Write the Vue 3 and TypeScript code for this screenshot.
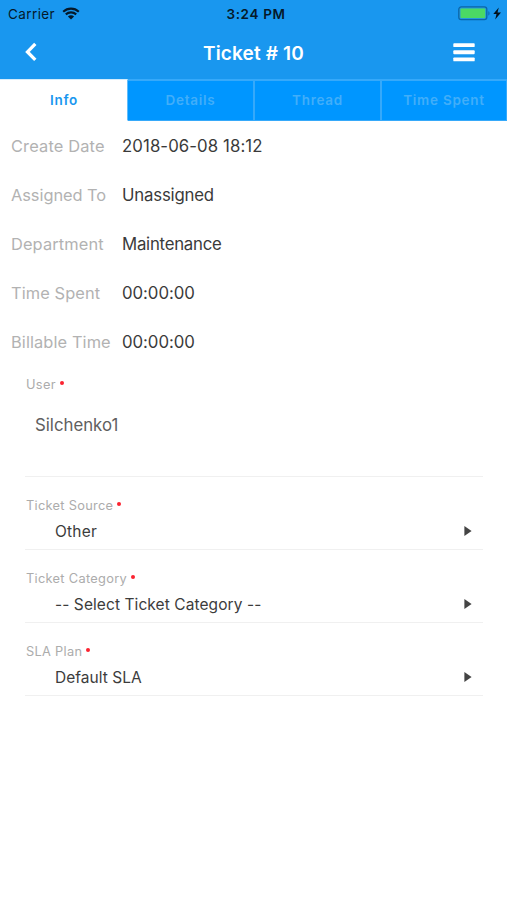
<script setup lang="ts">
import { ref } from 'vue'

interface Detail { label: string; value: string; labelGap: string; valueGap: string }
interface Field { label: string; value: string; gap: string }

const tabs: string[] = ['Info', 'Details', 'Thread', 'Time Spent']
const active = ref<string>('Info')

const details: Detail[] = [
  { label: 'Create Date', value: '2018-06-08 18:12', labelGap: '0.15px', valueGap: '0.08px' },
  { label: 'Assigned To', value: 'Unassigned', labelGap: '-0.05px', valueGap: '-0.2px' },
  { label: 'Department', value: 'Maintenance', labelGap: '0.12px', valueGap: '-0.25px' },
  { label: 'Time Spent', value: '00:00:00', labelGap: '0.1px', valueGap: '-0.05px' },
  { label: 'Billable Time', value: '00:00:00', labelGap: '0.1px', valueGap: '-0.05px' },
]

const fields: Field[] = [
  { label: 'Ticket Source', value: 'Other', gap: '0.2px' },
  { label: 'Ticket Category', value: '-- Select Ticket Category --', gap: '0.08px' },
  { label: 'SLA Plan', value: 'Default SLA', gap: '0.04px' },
]
</script>

<template>
  <div class="screen">
    <header class="top">
      <div class="status">
        <div class="carrier">
          <span>Carrier</span>
          <svg class="wifi" width="18" height="13" viewBox="0 0 18 13">
            <path d="M1.2 4.7C5.6.6 12.4.6 16.8 4.7" />
            <path d="M3.8 7.4c3-2.7 7.4-2.7 10.4 0" />
            <path class="dot" d="M9 12.4 5.9 9.4c1.8-1.5 4.4-1.5 6.2 0Z" />
          </svg>
        </div>
        <span class="clock">3:24 PM</span>
        <svg class="battery" width="44" height="15" viewBox="0 0 44 15">
          <rect x=".8" y=".9" width="28" height="12.8" rx="2.4" fill="#249bdc" stroke="#0c66a8" stroke-width="1.3" />
          <rect x="2.5" y="2.5" width="24.7" height="9.6" rx=".8" fill="#4bd964" />
          <path d="M30.4 5.2c1.5.5 1.5 3.7 0 4.2Z" fill="#0c66a8" />
          <path d="M40.8 1.5 35.3 8.1h3.2l-1.3 5.4 5.8-7h-3.5Z" fill="#03121e" />
        </svg>
      </div>
      <div class="nav">
        <button class="icon" aria-label="Back">
          <svg width="14" height="20" viewBox="0 0 14 20">
            <path d="M11.3 1.9 3.5 9.9l7.8 7.9" fill="none" stroke="#fff" stroke-width="3.3" />
          </svg>
        </button>
        <h1>Ticket # 10</h1>
        <button class="icon" aria-label="Menu">
          <svg width="22" height="19" viewBox="0 0 22 19" fill="#fff">
            <rect x=".3" y=".2" width="21.4" height="3.9" rx=".9" />
            <rect x=".3" y="7.3" width="21.4" height="3.9" rx=".9" />
            <rect x=".3" y="14.4" width="21.4" height="3.9" rx=".9" />
          </svg>
        </button>
      </div>
    </header>

    <nav class="tabs">
      <button v-for="tab in tabs" :key="tab" class="tab" :class="{ active: tab === active }" @click="active = tab">
        {{ tab }}
      </button>
    </nav>

    <dl class="details">
      <div v-for="d in details" :key="d.label" class="row">
        <dt :style="{ letterSpacing: d.labelGap }">{{ d.label }}</dt>
        <dd :style="{ letterSpacing: d.valueGap }">{{ d.value }}</dd>
      </div>
    </dl>

    <section class="form">
      <div class="field user">
        <div class="caption">User <i class="req"></i></div>
        <div class="name">Silchenko1</div>
      </div>
      <div v-for="f in fields" :key="f.label" class="field">
        <div class="caption">{{ f.label }} <i class="req"></i></div>
        <div class="select">
          <span :style="{ letterSpacing: f.gap }">{{ f.value }}</span>
          <svg width="8" height="10" viewBox="0 0 8 10"><path d="M.4 0 7.6 5 .4 10Z" fill="#444" /></svg>
        </div>
      </div>
    </section>
  </div>
</template>

<style>
body { background: #fff; }
</style>

<style scoped>
.screen {
  width: 507px;
  height: 900px;
  overflow: hidden;
  background: #fff;
  font-family: Inter, "Liberation Sans", sans-serif;
  color: #3c3c3c;
}
button { border: 0; padding: 0; margin: 0; background: none; font: inherit; }
.top { height: 79px; background: #1997ef; }
.status {
  display: grid;
  grid-template-columns: 1fr auto 1fr;
  align-items: center;
  height: 27px;
  padding: 0 5px 0 8px;
  color: #05192a;
  font-size: 13.5px;
}
.carrier { display: flex; align-items: center; gap: 7px; letter-spacing: 0.4px; }
.wifi path { fill: none; stroke: #05192a; stroke-width: 2.1; }
.wifi .dot { fill: #05192a; stroke: none; }
.clock { font-weight: 600; letter-spacing: 0.65px; padding-left: 2px; }
.battery { justify-self: end; }
.nav {
  display: flex;
  align-items: center;
  justify-content: space-between;
  height: 50px;
  padding: 0 32px 0 24px;
}
.icon { display: flex; }
h1 { margin: 0; color: #fff; font-size: 19px; font-weight: 600; line-height: 24px; letter-spacing: 0.15px; padding: 3px 0 0 16px; }
.tabs {
  display: grid;
  grid-template-columns: 128px 127px 127px 125px;
  height: 42px;
}
.tab {
  border: solid #36a9fa;
  border-width: 2px 2px 1px 0;
  background: #0096ff;
  color: #42aef9;
  font-size: 13.5px;
  line-height: 16px;
  font-weight: 600;
  letter-spacing: 0.75px;
  padding-bottom: 1px;
}
.tab:last-child { border-right-width: 1px; }
.tab.active { background: #fff; color: #1997ef; border-bottom-color: #fff; border-top: 1px solid #d5edfd; border-right: 1px solid #62bdfb; padding: 0 0 0 1px; }
.details { margin: 0; }
.row { display: flex; align-items: center; height: 48.9px; font-size: 16.8px; font-weight: 400; }
dt { width: 111px; padding: 1px 0 0 11px; color: #b2b2b2; white-space: nowrap; font-size: 16.4px; }
dd { margin: 0; padding-top: 1px; color: #3a3a3a; }
.form { padding: 0 24px 0 25px; }
.field { height: 73px; box-sizing: border-box; border-bottom: 1px solid #f0f0f0; padding-top: 21px; }
.user { height: 111.5px; padding-top: 11.5px; }
.caption { padding-left: 1px; font-size: 12.8px; line-height: 16px; color: #acacac; letter-spacing: 0.3px; }
.req { display: inline-block; width: 4px; height: 4px; border-radius: 50%; background: #fb2330; vertical-align: 4px; }
.name { margin: 22px 0 0 10px; font-size: 16.8px; line-height: 20px; color: #606060; }
.select {
  display: flex;
  align-items: center;
  justify-content: space-between;
  height: 35px;
  padding: 0 11px 0 30px;
  font-size: 15.5px;
}
</style>
